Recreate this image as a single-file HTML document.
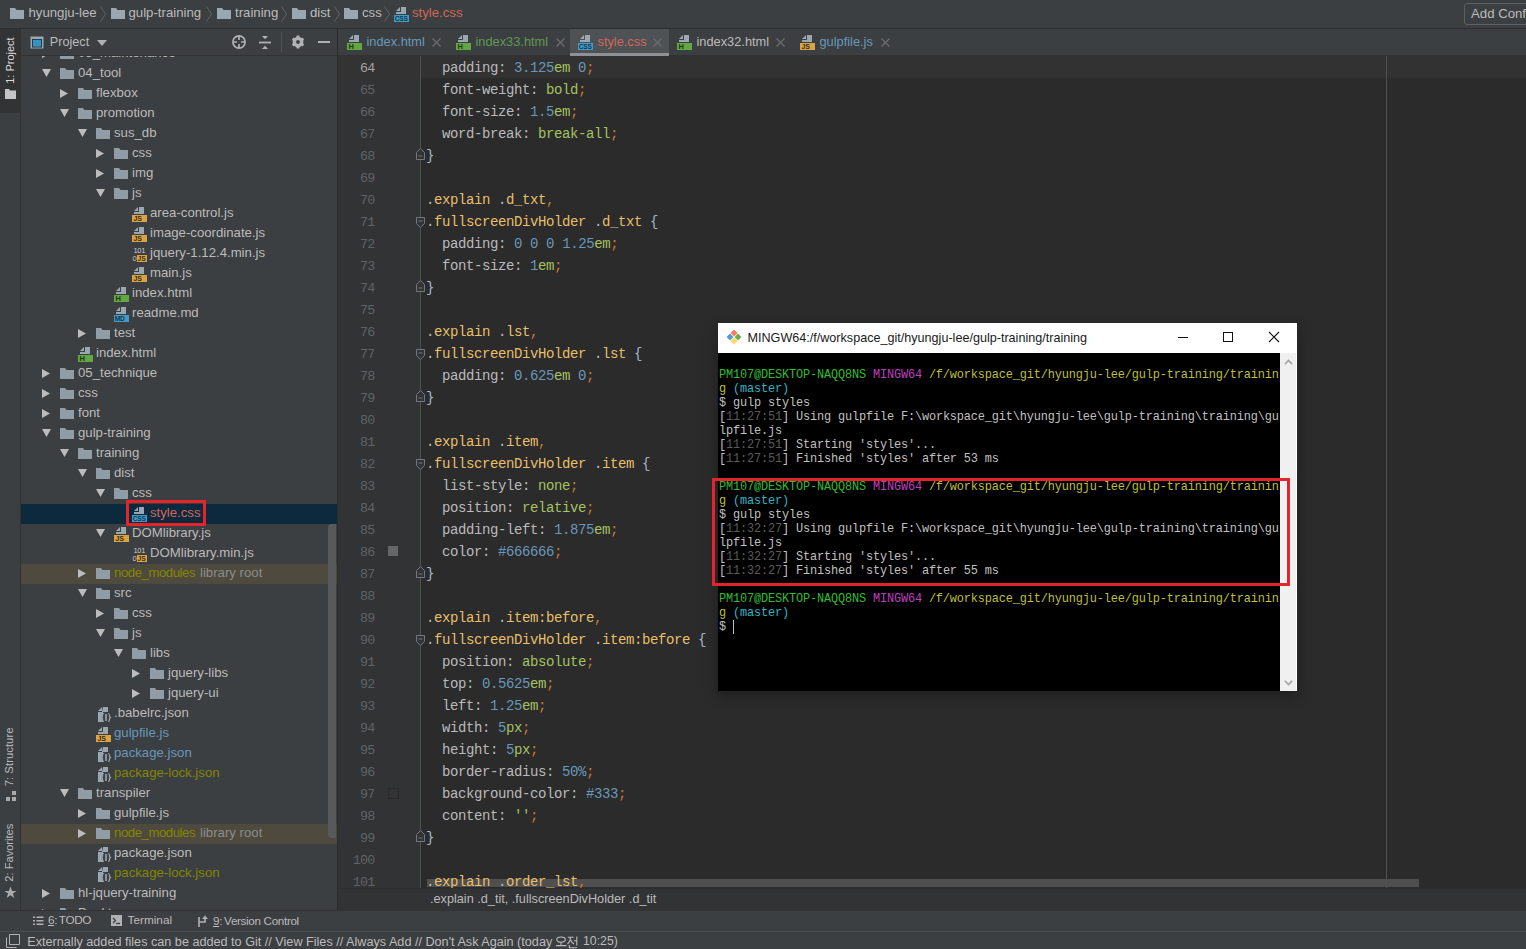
<!DOCTYPE html><html><head><meta charset="utf-8"><style>
*{margin:0;padding:0;box-sizing:border-box}
html,body{width:1526px;height:949px;overflow:hidden;background:#3c3f41}
body{position:relative;font-family:"Liberation Sans",sans-serif;color:#bbbbbb}
.abs{position:absolute}
.t{position:absolute;white-space:pre;font-family:"Liberation Sans",sans-serif}
.m{position:absolute;white-space:pre;font-family:"Liberation Mono",monospace}
svg{position:absolute;overflow:visible}


</style></head><body>
<div class="abs" style="left:0px;top:0px;width:1526px;height:28px;background:#3c3f41;"></div>
<div class="abs" style="left:0px;top:28px;width:1526px;height:1px;background:#2b2d2e;"></div>
<svg style="left:10px;top:8px" width="14" height="11" viewBox="0 0 14 11"><path d="M0 0H5L6.5 2H14V11H0Z" fill="#9aa7b0"/></svg>
<div class="t" style="left:28.5px;top:6.05px;font-size:13.2px;line-height:14.744px;color:#bbbbbb;">hyungju-lee</div>
<svg style="left:100px;top:6px" width="6" height="16" viewBox="0 0 6 16"><path d="M0.5 0.5L5.5 8L0.5 15.5" stroke="#606366" stroke-width="1" fill="none"/></svg>
<svg style="left:111px;top:8px" width="14" height="11" viewBox="0 0 14 11"><path d="M0 0H5L6.5 2H14V11H0Z" fill="#9aa7b0"/></svg>
<div class="t" style="left:128.5px;top:6.05px;font-size:13.2px;line-height:14.744px;color:#bbbbbb;">gulp-training</div>
<svg style="left:206px;top:6px" width="6" height="16" viewBox="0 0 6 16"><path d="M0.5 0.5L5.5 8L0.5 15.5" stroke="#606366" stroke-width="1" fill="none"/></svg>
<svg style="left:217px;top:8px" width="14" height="11" viewBox="0 0 14 11"><path d="M0 0H5L6.5 2H14V11H0Z" fill="#9aa7b0"/></svg>
<div class="t" style="left:235px;top:6.05px;font-size:13.2px;line-height:14.744px;color:#bbbbbb;">training</div>
<svg style="left:281px;top:6px" width="6" height="16" viewBox="0 0 6 16"><path d="M0.5 0.5L5.5 8L0.5 15.5" stroke="#606366" stroke-width="1" fill="none"/></svg>
<svg style="left:292px;top:8px" width="14" height="11" viewBox="0 0 14 11"><path d="M0 0H5L6.5 2H14V11H0Z" fill="#9aa7b0"/></svg>
<div class="t" style="left:310px;top:6.05px;font-size:13.2px;line-height:14.744px;color:#bbbbbb;">dist</div>
<svg style="left:334px;top:6px" width="6" height="16" viewBox="0 0 6 16"><path d="M0.5 0.5L5.5 8L0.5 15.5" stroke="#606366" stroke-width="1" fill="none"/></svg>
<svg style="left:344px;top:8px" width="14" height="11" viewBox="0 0 14 11"><path d="M0 0H5L6.5 2H14V11H0Z" fill="#9aa7b0"/></svg>
<div class="t" style="left:362px;top:6.05px;font-size:13.2px;line-height:14.744px;color:#bbbbbb;">css</div>
<svg style="left:384px;top:6px" width="6" height="16" viewBox="0 0 6 16"><path d="M0.5 0.5L5.5 8L0.5 15.5" stroke="#606366" stroke-width="1" fill="none"/></svg>
<svg style="left:394px;top:7px" width="16" height="16" viewBox="0 0 16 16"><path d="M2 4L6 0V4Z" fill="#9aa7b0"/><path d="M7 0H12V7H2V5H7Z" fill="#9aa7b0"/><rect x="0" y="8" width="15" height="7" fill="#4599c4"/><text x="0.8" y="14.4" font-family="Liberation Sans" font-size="6.6" font-weight="bold" fill="#0d3a52" letter-spacing="-0.2">CSS</text></svg>
<div class="t" style="left:412px;top:6.05px;font-size:13.2px;line-height:14.744px;color:#d1675a;">style.css</div>
<div class="abs" style="left:1464px;top:3px;width:80px;height:22px;background:#3c3f41;border:1px solid #5e6060;border-radius:3px"></div>
<div class="t" style="left:1471px;top:7.05px;font-size:13.2px;line-height:14.744px;color:#bbbbbb;">Add Configuration...</div>
<div class="abs" style="left:0px;top:29px;width:21px;height:881px;background:#3c3f41;"></div>
<div class="abs" style="left:20px;top:29px;width:1px;height:881px;background:#323232;"></div>
<div class="abs" style="left:0px;top:29px;width:20px;height:84px;background:#313335;"></div>
<div class="t" style="left:-19.5px;top:53.6px;width:60px;text-align:center;font-size:11px;line-height:13.2px;color:#dcdcdc;transform:rotate(-90deg);transform-origin:50% 50%">1: Project</div>
<svg style="left:5px;top:89px" width="11" height="10" viewBox="0 0 11 10"><path d="M0 0H4L5 1.5H11V10H0Z" fill="#c4c4c4"/></svg>
<div class="t" style="left:-23.0px;top:749.7px;width:66px;text-align:center;font-size:11.4px;line-height:13.68px;color:#bbbbbb;transform:rotate(-90deg);transform-origin:50% 50%">7: Structure</div>
<svg style="left:6px;top:791px" width="10" height="10" viewBox="0 0 10 10"><rect x="0" y="6" width="4" height="4" fill="#aaaaaa"/><rect x="6" y="6" width="4" height="4" fill="#aaaaaa"/><rect x="6" y="0" width="4" height="4" fill="#aaaaaa"/></svg>
<div class="t" style="left:-23.0px;top:846.3px;width:66px;text-align:center;font-size:11.1px;line-height:13.319999999999999px;color:#bbbbbb;transform:rotate(-90deg);transform-origin:50% 50%">2: Favorites</div>
<svg style="left:4px;top:886px" width="13" height="13" viewBox="0 0 24 24"><path d="M12 1L15 9H23L16.5 14L19 22L12 17L5 22L7.5 14L1 9H9Z" fill="#aaaaaa"/></svg>
<div class="abs" style="left:21px;top:29px;width:316px;height:26px;background:#3c3f41;"></div>
<div class="abs" style="left:21px;top:55px;width:316px;height:1px;background:#323232;"></div>
<div class="abs" style="left:337px;top:29px;width:1px;height:881px;background:#2b2b2b;"></div>
<svg style="left:30px;top:36px" width="14" height="13" viewBox="0 0 14 13"><rect x="0.5" y="0.5" width="13" height="12" fill="#9aa7b0"/><rect x="2" y="3" width="10" height="8.5" fill="#1f2a30"/><rect x="2.8" y="3.8" width="8.4" height="6.9" fill="#3592c4"/></svg>
<div class="t" style="left:49.7px;top:34.51px;font-size:12.7px;line-height:14.186px;color:#bbbbbb;">Project</div>
<svg style="left:97px;top:40px" width="10" height="6" viewBox="0 0 10 6"><path d="M0 0H10L5 6Z" fill="#afb1b3"/></svg>
<svg style="left:232px;top:35px" width="14" height="14" viewBox="0 0 14 14"><circle cx="7" cy="7" r="6.1" fill="none" stroke="#afb1b3" stroke-width="1.7"/><path d="M7 1V5M7 9V13M1 7H5M9 7H13" stroke="#afb1b3" stroke-width="1.7"/></svg>
<svg style="left:259px;top:36px" width="12" height="13" viewBox="0 0 12 13"><path d="M0 6.5H12" stroke="#afb1b3" stroke-width="1.8"/><path d="M3 0H9L6 3.2Z M3 13H9L6 9.8Z" fill="#afb1b3"/></svg>
<div class="abs" style="left:281px;top:32px;width:1px;height:20px;background:#505356;"></div>
<svg style="left:291px;top:35px" width="14" height="14" viewBox="0 0 14 14"><g fill="#afb1b3"><circle cx="7" cy="7" r="5.3"/><rect x="5.5" y="0.6" width="3" height="12.8" rx="0.5" transform="rotate(0 7 7)"/><rect x="5.5" y="0.6" width="3" height="12.8" rx="0.5" transform="rotate(60 7 7)"/><rect x="5.5" y="0.6" width="3" height="12.8" rx="0.5" transform="rotate(120 7 7)"/></g><circle cx="7" cy="7" r="1.9" fill="#3c3f41"/></svg>
<div class="abs" style="left:318px;top:41px;width:12px;height:2px;background:#afb1b3;"></div>
<div class="abs" style="left:21px;top:56px;width:316px;height:854px;overflow:hidden">
<svg style="left:21.2px;top:-7px" width="8" height="9" viewBox="0 0 8 9"><path d="M0 0L8 4.5L0 9Z" fill="#bcbcbc"/></svg>
<svg style="left:39px;top:-8px" width="14" height="11" viewBox="0 0 14 11"><path d="M0 0H5L6.5 2H14V11H0Z" fill="#919da6"/></svg>
<div class="t" style="left:57px;top:-9.95px;font-size:13.2px;line-height:14.744px;color:#bbbbbb;">05_maintenance</div>
<svg style="left:21px;top:13px" width="9" height="8" viewBox="0 0 9 8"><path d="M0 0H9L4.5 8Z" fill="#bcbcbc"/></svg>
<svg style="left:39px;top:12px" width="14" height="11" viewBox="0 0 14 11"><path d="M0 0H5L6.5 2H14V11H0Z" fill="#919da6"/></svg>
<div class="t" style="left:57px;top:10.05px;font-size:13.2px;line-height:14.744px;color:#bbbbbb;">04_tool</div>
<svg style="left:39.2px;top:33px" width="8" height="9" viewBox="0 0 8 9"><path d="M0 0L8 4.5L0 9Z" fill="#bcbcbc"/></svg>
<svg style="left:57px;top:32px" width="14" height="11" viewBox="0 0 14 11"><path d="M0 0H5L6.5 2H14V11H0Z" fill="#919da6"/></svg>
<div class="t" style="left:75px;top:30.05px;font-size:13.2px;line-height:14.744px;color:#bbbbbb;">flexbox</div>
<svg style="left:39px;top:53px" width="9" height="8" viewBox="0 0 9 8"><path d="M0 0H9L4.5 8Z" fill="#bcbcbc"/></svg>
<svg style="left:57px;top:52px" width="14" height="11" viewBox="0 0 14 11"><path d="M0 0H5L6.5 2H14V11H0Z" fill="#919da6"/></svg>
<div class="t" style="left:75px;top:50.05px;font-size:13.2px;line-height:14.744px;color:#bbbbbb;">promotion</div>
<svg style="left:57px;top:73px" width="9" height="8" viewBox="0 0 9 8"><path d="M0 0H9L4.5 8Z" fill="#bcbcbc"/></svg>
<svg style="left:75px;top:72px" width="14" height="11" viewBox="0 0 14 11"><path d="M0 0H5L6.5 2H14V11H0Z" fill="#919da6"/></svg>
<div class="t" style="left:93px;top:70.05px;font-size:13.2px;line-height:14.744px;color:#bbbbbb;">sus_db</div>
<svg style="left:75.2px;top:93px" width="8" height="9" viewBox="0 0 8 9"><path d="M0 0L8 4.5L0 9Z" fill="#bcbcbc"/></svg>
<svg style="left:93px;top:92px" width="14" height="11" viewBox="0 0 14 11"><path d="M0 0H5L6.5 2H14V11H0Z" fill="#919da6"/></svg>
<div class="t" style="left:111px;top:90.05px;font-size:13.2px;line-height:14.744px;color:#bbbbbb;">css</div>
<svg style="left:75.2px;top:113px" width="8" height="9" viewBox="0 0 8 9"><path d="M0 0L8 4.5L0 9Z" fill="#bcbcbc"/></svg>
<svg style="left:93px;top:112px" width="14" height="11" viewBox="0 0 14 11"><path d="M0 0H5L6.5 2H14V11H0Z" fill="#919da6"/></svg>
<div class="t" style="left:111px;top:110.05px;font-size:13.2px;line-height:14.744px;color:#bbbbbb;">img</div>
<svg style="left:75px;top:133px" width="9" height="8" viewBox="0 0 9 8"><path d="M0 0H9L4.5 8Z" fill="#bcbcbc"/></svg>
<svg style="left:93px;top:132px" width="14" height="11" viewBox="0 0 14 11"><path d="M0 0H5L6.5 2H14V11H0Z" fill="#919da6"/></svg>
<div class="t" style="left:111px;top:130.05px;font-size:13.2px;line-height:14.744px;color:#bbbbbb;">js</div>
<svg style="left:111px;top:151px" width="16" height="16" viewBox="0 0 16 16"><path d="M2 4L6 0V4Z" fill="#9aa7b0"/><path d="M7 0H12V7H2V5H7Z" fill="#9aa7b0"/><rect x="0" y="8" width="15" height="7" fill="#d9a343"/><text x="1.5" y="14.4" font-family="Liberation Sans" font-size="7" font-weight="bold" fill="#3a2e12" letter-spacing="-0.2">JS</text></svg>
<div class="t" style="left:129px;top:150.05px;font-size:13.2px;line-height:14.744px;color:#bbbbbb;">area-control.js</div>
<svg style="left:111px;top:171px" width="16" height="16" viewBox="0 0 16 16"><path d="M2 4L6 0V4Z" fill="#9aa7b0"/><path d="M7 0H12V7H2V5H7Z" fill="#9aa7b0"/><rect x="0" y="8" width="15" height="7" fill="#d9a343"/><text x="1.5" y="14.4" font-family="Liberation Sans" font-size="7" font-weight="bold" fill="#3a2e12" letter-spacing="-0.2">JS</text></svg>
<div class="t" style="left:129px;top:170.05px;font-size:13.2px;line-height:14.744px;color:#bbbbbb;">image-coordinate.js</div>
<svg style="left:111px;top:190px" width="16" height="17" viewBox="0 0 16 17"><text x="1.5" y="6.5" font-family="Liberation Sans" font-size="7.5" fill="#c8c8c8" letter-spacing="-0.3">101</text><text x="0.5" y="15" font-family="Liberation Sans" font-size="7.5" fill="#c8c8c8">0</text><rect x="5" y="9" width="10" height="7" fill="#d9a343"/><text x="5.6" y="15.2" font-family="Liberation Sans" font-size="6.6" font-weight="bold" fill="#3a2e12">JS</text></svg>
<div class="t" style="left:129px;top:190.05px;font-size:13.2px;line-height:14.744px;color:#bbbbbb;">jquery-1.12.4.min.js</div>
<svg style="left:111px;top:211px" width="16" height="16" viewBox="0 0 16 16"><path d="M2 4L6 0V4Z" fill="#9aa7b0"/><path d="M7 0H12V7H2V5H7Z" fill="#9aa7b0"/><rect x="0" y="8" width="15" height="7" fill="#d9a343"/><text x="1.5" y="14.4" font-family="Liberation Sans" font-size="7" font-weight="bold" fill="#3a2e12" letter-spacing="-0.2">JS</text></svg>
<div class="t" style="left:129px;top:210.05px;font-size:13.2px;line-height:14.744px;color:#bbbbbb;">main.js</div>
<svg style="left:93px;top:231px" width="16" height="16" viewBox="0 0 16 16"><path d="M2 4L6 0V4Z" fill="#9aa7b0"/><path d="M7 0H12V7H2V5H7Z" fill="#9aa7b0"/><rect x="0" y="8" width="15" height="7" fill="#62a744"/><text x="1.6" y="14.4" font-family="Liberation Sans" font-size="7.5" font-weight="bold" fill="#1d3b10" letter-spacing="-0.2">H</text></svg>
<div class="t" style="left:111px;top:230.05px;font-size:13.2px;line-height:14.744px;color:#bbbbbb;">index.html</div>
<svg style="left:93px;top:251px" width="16" height="16" viewBox="0 0 16 16"><path d="M2 4L6 0V4Z" fill="#9aa7b0"/><path d="M7 0H12V7H2V5H7Z" fill="#9aa7b0"/><rect x="0" y="8" width="15" height="7" fill="#4599c4"/><text x="0.8" y="14.4" font-family="Liberation Sans" font-size="6.6" font-weight="bold" fill="#0d3a52" letter-spacing="-0.2">MD</text></svg>
<div class="t" style="left:111px;top:250.05px;font-size:13.2px;line-height:14.744px;color:#bbbbbb;">readme.md</div>
<svg style="left:57.2px;top:273px" width="8" height="9" viewBox="0 0 8 9"><path d="M0 0L8 4.5L0 9Z" fill="#bcbcbc"/></svg>
<svg style="left:75px;top:272px" width="14" height="11" viewBox="0 0 14 11"><path d="M0 0H5L6.5 2H14V11H0Z" fill="#919da6"/></svg>
<div class="t" style="left:93px;top:270.05px;font-size:13.2px;line-height:14.744px;color:#bbbbbb;">test</div>
<svg style="left:57px;top:291px" width="16" height="16" viewBox="0 0 16 16"><path d="M2 4L6 0V4Z" fill="#9aa7b0"/><path d="M7 0H12V7H2V5H7Z" fill="#9aa7b0"/><rect x="0" y="8" width="15" height="7" fill="#62a744"/><text x="1.6" y="14.4" font-family="Liberation Sans" font-size="7.5" font-weight="bold" fill="#1d3b10" letter-spacing="-0.2">H</text></svg>
<div class="t" style="left:75px;top:290.05px;font-size:13.2px;line-height:14.744px;color:#bbbbbb;">index.html</div>
<svg style="left:21.2px;top:313px" width="8" height="9" viewBox="0 0 8 9"><path d="M0 0L8 4.5L0 9Z" fill="#bcbcbc"/></svg>
<svg style="left:39px;top:312px" width="14" height="11" viewBox="0 0 14 11"><path d="M0 0H5L6.5 2H14V11H0Z" fill="#919da6"/></svg>
<div class="t" style="left:57px;top:310.05px;font-size:13.2px;line-height:14.744px;color:#bbbbbb;">05_technique</div>
<svg style="left:21.2px;top:333px" width="8" height="9" viewBox="0 0 8 9"><path d="M0 0L8 4.5L0 9Z" fill="#bcbcbc"/></svg>
<svg style="left:39px;top:332px" width="14" height="11" viewBox="0 0 14 11"><path d="M0 0H5L6.5 2H14V11H0Z" fill="#919da6"/></svg>
<div class="t" style="left:57px;top:330.05px;font-size:13.2px;line-height:14.744px;color:#bbbbbb;">css</div>
<svg style="left:21.2px;top:353px" width="8" height="9" viewBox="0 0 8 9"><path d="M0 0L8 4.5L0 9Z" fill="#bcbcbc"/></svg>
<svg style="left:39px;top:352px" width="14" height="11" viewBox="0 0 14 11"><path d="M0 0H5L6.5 2H14V11H0Z" fill="#919da6"/></svg>
<div class="t" style="left:57px;top:350.05px;font-size:13.2px;line-height:14.744px;color:#bbbbbb;">font</div>
<svg style="left:21px;top:373px" width="9" height="8" viewBox="0 0 9 8"><path d="M0 0H9L4.5 8Z" fill="#bcbcbc"/></svg>
<svg style="left:39px;top:372px" width="14" height="11" viewBox="0 0 14 11"><path d="M0 0H5L6.5 2H14V11H0Z" fill="#919da6"/></svg>
<div class="t" style="left:57px;top:370.05px;font-size:13.2px;line-height:14.744px;color:#bbbbbb;">gulp-training</div>
<svg style="left:39px;top:393px" width="9" height="8" viewBox="0 0 9 8"><path d="M0 0H9L4.5 8Z" fill="#bcbcbc"/></svg>
<svg style="left:57px;top:392px" width="14" height="11" viewBox="0 0 14 11"><path d="M0 0H5L6.5 2H14V11H0Z" fill="#919da6"/></svg>
<div class="t" style="left:75px;top:390.05px;font-size:13.2px;line-height:14.744px;color:#bbbbbb;">training</div>
<svg style="left:57px;top:413px" width="9" height="8" viewBox="0 0 9 8"><path d="M0 0H9L4.5 8Z" fill="#bcbcbc"/></svg>
<svg style="left:75px;top:412px" width="14" height="11" viewBox="0 0 14 11"><path d="M0 0H5L6.5 2H14V11H0Z" fill="#919da6"/></svg>
<div class="t" style="left:93px;top:410.05px;font-size:13.2px;line-height:14.744px;color:#bbbbbb;">dist</div>
<svg style="left:75px;top:433px" width="9" height="8" viewBox="0 0 9 8"><path d="M0 0H9L4.5 8Z" fill="#bcbcbc"/></svg>
<svg style="left:93px;top:432px" width="14" height="11" viewBox="0 0 14 11"><path d="M0 0H5L6.5 2H14V11H0Z" fill="#919da6"/></svg>
<div class="t" style="left:111px;top:430.05px;font-size:13.2px;line-height:14.744px;color:#bbbbbb;">css</div>
<div class="abs" style="left:0;top:448px;width:316px;height:20px;background:#0d293e"></div>
<svg style="left:111px;top:451px" width="16" height="16" viewBox="0 0 16 16"><path d="M2 4L6 0V4Z" fill="#9aa7b0"/><path d="M7 0H12V7H2V5H7Z" fill="#9aa7b0"/><rect x="0" y="8" width="15" height="7" fill="#4599c4"/><text x="0.8" y="14.4" font-family="Liberation Sans" font-size="6.6" font-weight="bold" fill="#0d3a52" letter-spacing="-0.2">CSS</text></svg>
<div class="t" style="left:129px;top:450.05px;font-size:13.2px;line-height:14.744px;color:#d1675a;">style.css</div>
<svg style="left:75px;top:473px" width="9" height="8" viewBox="0 0 9 8"><path d="M0 0H9L4.5 8Z" fill="#bcbcbc"/></svg>
<svg style="left:93px;top:471px" width="16" height="16" viewBox="0 0 16 16"><path d="M2 4L6 0V4Z" fill="#9aa7b0"/><path d="M7 0H12V7H2V5H7Z" fill="#9aa7b0"/><rect x="0" y="8" width="15" height="7" fill="#d9a343"/><text x="1.5" y="14.4" font-family="Liberation Sans" font-size="7" font-weight="bold" fill="#3a2e12" letter-spacing="-0.2">JS</text></svg>
<div class="t" style="left:111px;top:470.05px;font-size:13.2px;line-height:14.744px;color:#bbbbbb;">DOMlibrary.js</div>
<svg style="left:111px;top:490px" width="16" height="17" viewBox="0 0 16 17"><text x="1.5" y="6.5" font-family="Liberation Sans" font-size="7.5" fill="#c8c8c8" letter-spacing="-0.3">101</text><text x="0.5" y="15" font-family="Liberation Sans" font-size="7.5" fill="#c8c8c8">0</text><rect x="5" y="9" width="10" height="7" fill="#d9a343"/><text x="5.6" y="15.2" font-family="Liberation Sans" font-size="6.6" font-weight="bold" fill="#3a2e12">JS</text></svg>
<div class="t" style="left:129px;top:490.05px;font-size:13.2px;line-height:14.744px;color:#bbbbbb;">DOMlibrary.min.js</div>
<div class="abs" style="left:0;top:508px;width:316px;height:20px;background:#4e4a3d"></div>
<svg style="left:57.2px;top:513px" width="8" height="9" viewBox="0 0 8 9"><path d="M0 0L8 4.5L0 9Z" fill="#bcbcbc"/></svg>
<svg style="left:75px;top:512px" width="14" height="11" viewBox="0 0 14 11"><path d="M0 0H5L6.5 2H14V11H0Z" fill="#919da6"/></svg>
<div class="t" style="left:93px;top:510.05px;font-size:13.2px;line-height:14.744px;color:#848504;letter-spacing:-0.45px">node_modules</div>
<div class="t" style="left:179px;top:510.05px;font-size:13.2px;line-height:14.744px;color:#8c8c8c;">library root</div>
<svg style="left:57px;top:533px" width="9" height="8" viewBox="0 0 9 8"><path d="M0 0H9L4.5 8Z" fill="#bcbcbc"/></svg>
<svg style="left:75px;top:532px" width="14" height="11" viewBox="0 0 14 11"><path d="M0 0H5L6.5 2H14V11H0Z" fill="#919da6"/></svg>
<div class="t" style="left:93px;top:530.05px;font-size:13.2px;line-height:14.744px;color:#bbbbbb;">src</div>
<svg style="left:75.2px;top:553px" width="8" height="9" viewBox="0 0 8 9"><path d="M0 0L8 4.5L0 9Z" fill="#bcbcbc"/></svg>
<svg style="left:93px;top:552px" width="14" height="11" viewBox="0 0 14 11"><path d="M0 0H5L6.5 2H14V11H0Z" fill="#919da6"/></svg>
<div class="t" style="left:111px;top:550.05px;font-size:13.2px;line-height:14.744px;color:#bbbbbb;">css</div>
<svg style="left:75px;top:573px" width="9" height="8" viewBox="0 0 9 8"><path d="M0 0H9L4.5 8Z" fill="#bcbcbc"/></svg>
<svg style="left:93px;top:572px" width="14" height="11" viewBox="0 0 14 11"><path d="M0 0H5L6.5 2H14V11H0Z" fill="#919da6"/></svg>
<div class="t" style="left:111px;top:570.05px;font-size:13.2px;line-height:14.744px;color:#bbbbbb;">js</div>
<svg style="left:93px;top:593px" width="9" height="8" viewBox="0 0 9 8"><path d="M0 0H9L4.5 8Z" fill="#bcbcbc"/></svg>
<svg style="left:111px;top:592px" width="14" height="11" viewBox="0 0 14 11"><path d="M0 0H5L6.5 2H14V11H0Z" fill="#919da6"/></svg>
<div class="t" style="left:129px;top:590.05px;font-size:13.2px;line-height:14.744px;color:#bbbbbb;">libs</div>
<svg style="left:111.2px;top:613px" width="8" height="9" viewBox="0 0 8 9"><path d="M0 0L8 4.5L0 9Z" fill="#bcbcbc"/></svg>
<svg style="left:129px;top:612px" width="14" height="11" viewBox="0 0 14 11"><path d="M0 0H5L6.5 2H14V11H0Z" fill="#919da6"/></svg>
<div class="t" style="left:147px;top:610.05px;font-size:13.2px;line-height:14.744px;color:#bbbbbb;">jquery-libs</div>
<svg style="left:111.2px;top:633px" width="8" height="9" viewBox="0 0 8 9"><path d="M0 0L8 4.5L0 9Z" fill="#bcbcbc"/></svg>
<svg style="left:129px;top:632px" width="14" height="11" viewBox="0 0 14 11"><path d="M0 0H5L6.5 2H14V11H0Z" fill="#919da6"/></svg>
<div class="t" style="left:147px;top:630.05px;font-size:13.2px;line-height:14.744px;color:#bbbbbb;">jquery-ui</div>
<svg style="left:75px;top:651px" width="16" height="16" viewBox="0 0 16 16"><path d="M2 4L6 0V4Z" fill="#9aa7b0"/><path d="M7 0H12V5H2V15H6V5Z" fill="#9aa7b0"/><path d="M2 5H7V15H2Z" fill="#9aa7b0"/><ellipse cx="10" cy="10.5" rx="4.5" ry="5" fill="#3c3f41"/><path d="M8 6.5Q6.5 6.5 6.5 8.5V9.5L5.5 10.5L6.5 11.5V12.5Q6.5 14.5 8 14.5M12 6.5Q13.5 6.5 13.5 8.5V9.5L14.5 10.5L13.5 11.5V12.5Q13.5 14.5 12 14.5" stroke="#9aa7b0" stroke-width="1.2" fill="none"/><path d="M10 7V14" stroke="#9aa7b0" stroke-width="1.6"/></svg>
<div class="t" style="left:93px;top:650.05px;font-size:13.2px;line-height:14.744px;color:#bbbbbb;">.babelrc.json</div>
<svg style="left:75px;top:671px" width="16" height="16" viewBox="0 0 16 16"><path d="M2 4L6 0V4Z" fill="#9aa7b0"/><path d="M7 0H12V7H2V5H7Z" fill="#9aa7b0"/><rect x="0" y="8" width="15" height="7" fill="#d9a343"/><text x="1.5" y="14.4" font-family="Liberation Sans" font-size="7" font-weight="bold" fill="#3a2e12" letter-spacing="-0.2">JS</text></svg>
<div class="t" style="left:93px;top:670.05px;font-size:13.2px;line-height:14.744px;color:#6897bb;">gulpfile.js</div>
<svg style="left:75px;top:691px" width="16" height="16" viewBox="0 0 16 16"><path d="M2 4L6 0V4Z" fill="#9aa7b0"/><path d="M7 0H12V5H2V15H6V5Z" fill="#9aa7b0"/><path d="M2 5H7V15H2Z" fill="#9aa7b0"/><ellipse cx="10" cy="10.5" rx="4.5" ry="5" fill="#3c3f41"/><path d="M8 6.5Q6.5 6.5 6.5 8.5V9.5L5.5 10.5L6.5 11.5V12.5Q6.5 14.5 8 14.5M12 6.5Q13.5 6.5 13.5 8.5V9.5L14.5 10.5L13.5 11.5V12.5Q13.5 14.5 12 14.5" stroke="#9aa7b0" stroke-width="1.2" fill="none"/><path d="M10 7V14" stroke="#9aa7b0" stroke-width="1.6"/></svg>
<div class="t" style="left:93px;top:690.05px;font-size:13.2px;line-height:14.744px;color:#6897bb;">package.json</div>
<svg style="left:75px;top:711px" width="16" height="16" viewBox="0 0 16 16"><path d="M2 4L6 0V4Z" fill="#9aa7b0"/><path d="M7 0H12V5H2V15H6V5Z" fill="#9aa7b0"/><path d="M2 5H7V15H2Z" fill="#9aa7b0"/><ellipse cx="10" cy="10.5" rx="4.5" ry="5" fill="#3c3f41"/><path d="M8 6.5Q6.5 6.5 6.5 8.5V9.5L5.5 10.5L6.5 11.5V12.5Q6.5 14.5 8 14.5M12 6.5Q13.5 6.5 13.5 8.5V9.5L14.5 10.5L13.5 11.5V12.5Q13.5 14.5 12 14.5" stroke="#9aa7b0" stroke-width="1.2" fill="none"/><path d="M10 7V14" stroke="#9aa7b0" stroke-width="1.6"/></svg>
<div class="t" style="left:93px;top:710.05px;font-size:13.2px;line-height:14.744px;color:#848504;">package-lock.json</div>
<svg style="left:39px;top:733px" width="9" height="8" viewBox="0 0 9 8"><path d="M0 0H9L4.5 8Z" fill="#bcbcbc"/></svg>
<svg style="left:57px;top:732px" width="14" height="11" viewBox="0 0 14 11"><path d="M0 0H5L6.5 2H14V11H0Z" fill="#919da6"/></svg>
<div class="t" style="left:75px;top:730.05px;font-size:13.2px;line-height:14.744px;color:#bbbbbb;">transpiler</div>
<svg style="left:57.2px;top:753px" width="8" height="9" viewBox="0 0 8 9"><path d="M0 0L8 4.5L0 9Z" fill="#bcbcbc"/></svg>
<svg style="left:75px;top:752px" width="14" height="11" viewBox="0 0 14 11"><path d="M0 0H5L6.5 2H14V11H0Z" fill="#919da6"/></svg>
<div class="t" style="left:93px;top:750.05px;font-size:13.2px;line-height:14.744px;color:#bbbbbb;">gulpfile.js</div>
<div class="abs" style="left:0;top:768px;width:316px;height:20px;background:#4e4a3d"></div>
<svg style="left:57.2px;top:773px" width="8" height="9" viewBox="0 0 8 9"><path d="M0 0L8 4.5L0 9Z" fill="#bcbcbc"/></svg>
<svg style="left:75px;top:772px" width="14" height="11" viewBox="0 0 14 11"><path d="M0 0H5L6.5 2H14V11H0Z" fill="#919da6"/></svg>
<div class="t" style="left:93px;top:770.05px;font-size:13.2px;line-height:14.744px;color:#848504;letter-spacing:-0.45px">node_modules</div>
<div class="t" style="left:179px;top:770.05px;font-size:13.2px;line-height:14.744px;color:#8c8c8c;">library root</div>
<svg style="left:75px;top:791px" width="16" height="16" viewBox="0 0 16 16"><path d="M2 4L6 0V4Z" fill="#9aa7b0"/><path d="M7 0H12V5H2V15H6V5Z" fill="#9aa7b0"/><path d="M2 5H7V15H2Z" fill="#9aa7b0"/><ellipse cx="10" cy="10.5" rx="4.5" ry="5" fill="#3c3f41"/><path d="M8 6.5Q6.5 6.5 6.5 8.5V9.5L5.5 10.5L6.5 11.5V12.5Q6.5 14.5 8 14.5M12 6.5Q13.5 6.5 13.5 8.5V9.5L14.5 10.5L13.5 11.5V12.5Q13.5 14.5 12 14.5" stroke="#9aa7b0" stroke-width="1.2" fill="none"/><path d="M10 7V14" stroke="#9aa7b0" stroke-width="1.6"/></svg>
<div class="t" style="left:93px;top:790.05px;font-size:13.2px;line-height:14.744px;color:#bbbbbb;">package.json</div>
<svg style="left:75px;top:811px" width="16" height="16" viewBox="0 0 16 16"><path d="M2 4L6 0V4Z" fill="#9aa7b0"/><path d="M7 0H12V5H2V15H6V5Z" fill="#9aa7b0"/><path d="M2 5H7V15H2Z" fill="#9aa7b0"/><ellipse cx="10" cy="10.5" rx="4.5" ry="5" fill="#3c3f41"/><path d="M8 6.5Q6.5 6.5 6.5 8.5V9.5L5.5 10.5L6.5 11.5V12.5Q6.5 14.5 8 14.5M12 6.5Q13.5 6.5 13.5 8.5V9.5L14.5 10.5L13.5 11.5V12.5Q13.5 14.5 12 14.5" stroke="#9aa7b0" stroke-width="1.2" fill="none"/><path d="M10 7V14" stroke="#9aa7b0" stroke-width="1.6"/></svg>
<div class="t" style="left:93px;top:810.05px;font-size:13.2px;line-height:14.744px;color:#848504;">package-lock.json</div>
<svg style="left:21.2px;top:833px" width="8" height="9" viewBox="0 0 8 9"><path d="M0 0L8 4.5L0 9Z" fill="#bcbcbc"/></svg>
<svg style="left:39px;top:832px" width="14" height="11" viewBox="0 0 14 11"><path d="M0 0H5L6.5 2H14V11H0Z" fill="#919da6"/></svg>
<div class="t" style="left:57px;top:830.05px;font-size:13.2px;line-height:14.744px;color:#bbbbbb;">hl-jquery-training</div>
<svg style="left:21.2px;top:853px" width="8" height="9" viewBox="0 0 8 9"><path d="M0 0L8 4.5L0 9Z" fill="#bcbcbc"/></svg>
<svg style="left:39px;top:852px" width="14" height="11" viewBox="0 0 14 11"><path d="M0 0H5L6.5 2H14V11H0Z" fill="#919da6"/></svg>
<div class="t" style="left:57px;top:850.05px;font-size:13.2px;line-height:14.744px;color:#bbbbbb;">Desktop</div>
</div>
<div class="abs" style="left:328px;top:524px;width:8px;height:314px;background:#57595b;border-radius:4px 0 0 4px"></div>
<div class="abs" style="left:126px;top:500px;width:80px;height:26px;border:3px solid #e3242b"></div>
<div class="abs" style="left:338px;top:29px;width:1188px;height:26px;background:#3c3f41;"></div>
<div class="abs" style="left:338px;top:55px;width:1188px;height:1px;background:#323232;"></div>
<div class="abs" style="left:570px;top:29px;width:99px;height:27px;background:#4e5254;"></div>
<div class="abs" style="left:570px;top:53px;width:99px;height:3px;background:#8e9297;"></div>
<svg style="left:347px;top:35px" width="16" height="16" viewBox="0 0 16 16"><path d="M2 4L6 0V4Z" fill="#9aa7b0"/><path d="M7 0H12V7H2V5H7Z" fill="#9aa7b0"/><rect x="0" y="8" width="15" height="7" fill="#62a744"/><text x="1.6" y="14.4" font-family="Liberation Sans" font-size="7.5" font-weight="bold" fill="#1d3b10" letter-spacing="-0.2">H</text></svg>
<div class="t" style="left:366.5px;top:35.42px;font-size:12.8px;line-height:14.298px;color:#6897bb;">index.html</div>
<svg style="left:432px;top:38px" width="9" height="9" viewBox="0 0 9 9"><path d="M0.5 0.5L8.5 8.5M8.5 0.5L0.5 8.5" stroke="#6c6e70" stroke-width="1.1"/></svg>
<svg style="left:456px;top:35px" width="16" height="16" viewBox="0 0 16 16"><path d="M2 4L6 0V4Z" fill="#9aa7b0"/><path d="M7 0H12V7H2V5H7Z" fill="#9aa7b0"/><rect x="0" y="8" width="15" height="7" fill="#62a744"/><text x="1.6" y="14.4" font-family="Liberation Sans" font-size="7.5" font-weight="bold" fill="#1d3b10" letter-spacing="-0.2">H</text></svg>
<div class="t" style="left:475.5px;top:35.42px;font-size:12.8px;line-height:14.298px;color:#629755;">index33.html</div>
<svg style="left:556px;top:38px" width="9" height="9" viewBox="0 0 9 9"><path d="M0.5 0.5L8.5 8.5M8.5 0.5L0.5 8.5" stroke="#6c6e70" stroke-width="1.1"/></svg>
<svg style="left:578px;top:35px" width="16" height="16" viewBox="0 0 16 16"><path d="M2 4L6 0V4Z" fill="#9aa7b0"/><path d="M7 0H12V7H2V5H7Z" fill="#9aa7b0"/><rect x="0" y="8" width="15" height="7" fill="#4599c4"/><text x="0.8" y="14.4" font-family="Liberation Sans" font-size="6.6" font-weight="bold" fill="#0d3a52" letter-spacing="-0.2">CSS</text></svg>
<div class="t" style="left:597.5px;top:35.42px;font-size:12.8px;line-height:14.298px;color:#d1675a;">style.css</div>
<svg style="left:653px;top:38px" width="9" height="9" viewBox="0 0 9 9"><path d="M0.5 0.5L8.5 8.5M8.5 0.5L0.5 8.5" stroke="#6c6e70" stroke-width="1.1"/></svg>
<svg style="left:677px;top:35px" width="16" height="16" viewBox="0 0 16 16"><path d="M2 4L6 0V4Z" fill="#9aa7b0"/><path d="M7 0H12V7H2V5H7Z" fill="#9aa7b0"/><rect x="0" y="8" width="15" height="7" fill="#62a744"/><text x="1.6" y="14.4" font-family="Liberation Sans" font-size="7.5" font-weight="bold" fill="#1d3b10" letter-spacing="-0.2">H</text></svg>
<div class="t" style="left:696.5px;top:35.42px;font-size:12.8px;line-height:14.298px;color:#bbbbbb;">index32.html</div>
<svg style="left:776px;top:38px" width="9" height="9" viewBox="0 0 9 9"><path d="M0.5 0.5L8.5 8.5M8.5 0.5L0.5 8.5" stroke="#6c6e70" stroke-width="1.1"/></svg>
<svg style="left:800px;top:35px" width="16" height="16" viewBox="0 0 16 16"><path d="M2 4L6 0V4Z" fill="#9aa7b0"/><path d="M7 0H12V7H2V5H7Z" fill="#9aa7b0"/><rect x="0" y="8" width="15" height="7" fill="#d9a343"/><text x="1.5" y="14.4" font-family="Liberation Sans" font-size="7" font-weight="bold" fill="#3a2e12" letter-spacing="-0.2">JS</text></svg>
<div class="t" style="left:819.5px;top:35.42px;font-size:12.8px;line-height:14.298px;color:#6897bb;">gulpfile.js</div>
<svg style="left:881px;top:38px" width="9" height="9" viewBox="0 0 9 9"><path d="M0.5 0.5L8.5 8.5M8.5 0.5L0.5 8.5" stroke="#6c6e70" stroke-width="1.1"/></svg>
<div class="abs" style="left:338px;top:56px;width:1188px;height:832px;background:#2b2b2b;"></div>
<div class="abs" style="left:338px;top:56px;width:82px;height:832px;background:#313335;"></div>
<div class="abs" style="left:421px;top:56px;width:1105px;height:22px;background:#323232;"></div>
<div class="abs" style="left:338px;top:56px;width:82px;height:22px;background:#333333;"></div>
<div class="abs" style="left:427px;top:879px;width:992px;height:8px;background:#4f4f4f;"></div>
<div class="abs" style="left:420px;top:56px;width:1px;height:832px;background:#4e5052;"></div>
<div class="abs" style="left:1386px;top:56px;width:1px;height:832px;background:#505050;"></div>
<div class="abs" style="left:338px;top:56px;width:1188px;height:832px;overflow:hidden">
<div class="m" style="left:0px;width:36.4px;text-align:right;top:5.29px;font-size:13.34px;line-height:15.11px;letter-spacing:-0.8px;color:#a4a3a3">64</div>
<div class="m" style="left:88px;top:5.04px;font-size:14px;line-height:15.86px;letter-spacing:-0.4px"><span style="color:#bababa">  padding</span><span style="color:#bababa">: </span><span style="color:#6897bb">3.125</span><span style="color:#a5c261">em</span><span style="color:#bababa"> </span><span style="color:#6897bb">0</span><span style="color:#cc7832">;</span></div>
<div class="m" style="left:0px;width:36.4px;text-align:right;top:27.29px;font-size:13.34px;line-height:15.11px;letter-spacing:-0.8px;color:#606366">65</div>
<div class="m" style="left:88px;top:27.04px;font-size:14px;line-height:15.86px;letter-spacing:-0.4px"><span style="color:#bababa">  font-weight</span><span style="color:#bababa">: </span><span style="color:#a5c261">bold</span><span style="color:#cc7832">;</span></div>
<div class="m" style="left:0px;width:36.4px;text-align:right;top:49.29px;font-size:13.34px;line-height:15.11px;letter-spacing:-0.8px;color:#606366">66</div>
<div class="m" style="left:88px;top:49.04px;font-size:14px;line-height:15.86px;letter-spacing:-0.4px"><span style="color:#bababa">  font-size</span><span style="color:#bababa">: </span><span style="color:#6897bb">1.5</span><span style="color:#a5c261">em</span><span style="color:#cc7832">;</span></div>
<div class="m" style="left:0px;width:36.4px;text-align:right;top:71.29px;font-size:13.34px;line-height:15.11px;letter-spacing:-0.8px;color:#606366">67</div>
<div class="m" style="left:88px;top:71.04px;font-size:14px;line-height:15.86px;letter-spacing:-0.4px"><span style="color:#bababa">  word-break</span><span style="color:#bababa">: </span><span style="color:#a5c261">break-all</span><span style="color:#cc7832">;</span></div>
<div class="m" style="left:0px;width:36.4px;text-align:right;top:93.29px;font-size:13.34px;line-height:15.11px;letter-spacing:-0.8px;color:#606366">68</div>
<div class="m" style="left:88px;top:93.04px;font-size:14px;line-height:15.86px;letter-spacing:-0.4px"><span style="color:#a9b7c6">}</span></div>
<div class="m" style="left:0px;width:36.4px;text-align:right;top:115.29px;font-size:13.34px;line-height:15.11px;letter-spacing:-0.8px;color:#606366">69</div>
<div class="m" style="left:0px;width:36.4px;text-align:right;top:137.29px;font-size:13.34px;line-height:15.11px;letter-spacing:-0.8px;color:#606366">70</div>
<div class="m" style="left:88px;top:137.04px;font-size:14px;line-height:15.86px;letter-spacing:-0.4px"><span style="color:#bababa">.</span><span style="color:#e8bf6a">explain</span><span style="color:#bababa"> </span><span style="color:#bababa">.</span><span style="color:#e8bf6a">d_txt</span><span style="color:#cc7832">,</span></div>
<div class="m" style="left:0px;width:36.4px;text-align:right;top:159.29px;font-size:13.34px;line-height:15.11px;letter-spacing:-0.8px;color:#606366">71</div>
<div class="m" style="left:88px;top:159.04px;font-size:14px;line-height:15.86px;letter-spacing:-0.4px"><span style="color:#bababa">.</span><span style="color:#e8bf6a">fullscreenDivHolder</span><span style="color:#bababa"> </span><span style="color:#bababa">.</span><span style="color:#e8bf6a">d_txt</span><span style="color:#a9b7c6"> {</span></div>
<div class="m" style="left:0px;width:36.4px;text-align:right;top:181.29px;font-size:13.34px;line-height:15.11px;letter-spacing:-0.8px;color:#606366">72</div>
<div class="m" style="left:88px;top:181.04px;font-size:14px;line-height:15.86px;letter-spacing:-0.4px"><span style="color:#bababa">  padding</span><span style="color:#bababa">: </span><span style="color:#6897bb">0</span><span style="color:#bababa"> </span><span style="color:#6897bb">0</span><span style="color:#bababa"> </span><span style="color:#6897bb">0</span><span style="color:#bababa"> </span><span style="color:#6897bb">1.25</span><span style="color:#a5c261">em</span><span style="color:#cc7832">;</span></div>
<div class="m" style="left:0px;width:36.4px;text-align:right;top:203.29px;font-size:13.34px;line-height:15.11px;letter-spacing:-0.8px;color:#606366">73</div>
<div class="m" style="left:88px;top:203.04px;font-size:14px;line-height:15.86px;letter-spacing:-0.4px"><span style="color:#bababa">  font-size</span><span style="color:#bababa">: </span><span style="color:#6897bb">1</span><span style="color:#a5c261">em</span><span style="color:#cc7832">;</span></div>
<div class="m" style="left:0px;width:36.4px;text-align:right;top:225.29px;font-size:13.34px;line-height:15.11px;letter-spacing:-0.8px;color:#606366">74</div>
<div class="m" style="left:88px;top:225.04px;font-size:14px;line-height:15.86px;letter-spacing:-0.4px"><span style="color:#a9b7c6">}</span></div>
<div class="m" style="left:0px;width:36.4px;text-align:right;top:247.29px;font-size:13.34px;line-height:15.11px;letter-spacing:-0.8px;color:#606366">75</div>
<div class="m" style="left:0px;width:36.4px;text-align:right;top:269.29px;font-size:13.34px;line-height:15.11px;letter-spacing:-0.8px;color:#606366">76</div>
<div class="m" style="left:88px;top:269.04px;font-size:14px;line-height:15.86px;letter-spacing:-0.4px"><span style="color:#bababa">.</span><span style="color:#e8bf6a">explain</span><span style="color:#bababa"> </span><span style="color:#bababa">.</span><span style="color:#e8bf6a">lst</span><span style="color:#cc7832">,</span></div>
<div class="m" style="left:0px;width:36.4px;text-align:right;top:291.29px;font-size:13.34px;line-height:15.11px;letter-spacing:-0.8px;color:#606366">77</div>
<div class="m" style="left:88px;top:291.04px;font-size:14px;line-height:15.86px;letter-spacing:-0.4px"><span style="color:#bababa">.</span><span style="color:#e8bf6a">fullscreenDivHolder</span><span style="color:#bababa"> </span><span style="color:#bababa">.</span><span style="color:#e8bf6a">lst</span><span style="color:#a9b7c6"> {</span></div>
<div class="m" style="left:0px;width:36.4px;text-align:right;top:313.29px;font-size:13.34px;line-height:15.11px;letter-spacing:-0.8px;color:#606366">78</div>
<div class="m" style="left:88px;top:313.04px;font-size:14px;line-height:15.86px;letter-spacing:-0.4px"><span style="color:#bababa">  padding</span><span style="color:#bababa">: </span><span style="color:#6897bb">0.625</span><span style="color:#a5c261">em</span><span style="color:#bababa"> </span><span style="color:#6897bb">0</span><span style="color:#cc7832">;</span></div>
<div class="m" style="left:0px;width:36.4px;text-align:right;top:335.29px;font-size:13.34px;line-height:15.11px;letter-spacing:-0.8px;color:#606366">79</div>
<div class="m" style="left:88px;top:335.04px;font-size:14px;line-height:15.86px;letter-spacing:-0.4px"><span style="color:#a9b7c6">}</span></div>
<div class="m" style="left:0px;width:36.4px;text-align:right;top:357.29px;font-size:13.34px;line-height:15.11px;letter-spacing:-0.8px;color:#606366">80</div>
<div class="m" style="left:0px;width:36.4px;text-align:right;top:379.29px;font-size:13.34px;line-height:15.11px;letter-spacing:-0.8px;color:#606366">81</div>
<div class="m" style="left:88px;top:379.04px;font-size:14px;line-height:15.86px;letter-spacing:-0.4px"><span style="color:#bababa">.</span><span style="color:#e8bf6a">explain</span><span style="color:#bababa"> </span><span style="color:#bababa">.</span><span style="color:#e8bf6a">item</span><span style="color:#cc7832">,</span></div>
<div class="m" style="left:0px;width:36.4px;text-align:right;top:401.29px;font-size:13.34px;line-height:15.11px;letter-spacing:-0.8px;color:#606366">82</div>
<div class="m" style="left:88px;top:401.04px;font-size:14px;line-height:15.86px;letter-spacing:-0.4px"><span style="color:#bababa">.</span><span style="color:#e8bf6a">fullscreenDivHolder</span><span style="color:#bababa"> </span><span style="color:#bababa">.</span><span style="color:#e8bf6a">item</span><span style="color:#a9b7c6"> {</span></div>
<div class="m" style="left:0px;width:36.4px;text-align:right;top:423.29px;font-size:13.34px;line-height:15.11px;letter-spacing:-0.8px;color:#606366">83</div>
<div class="m" style="left:88px;top:423.04px;font-size:14px;line-height:15.86px;letter-spacing:-0.4px"><span style="color:#bababa">  list-style</span><span style="color:#bababa">: </span><span style="color:#a5c261">none</span><span style="color:#cc7832">;</span></div>
<div class="m" style="left:0px;width:36.4px;text-align:right;top:445.29px;font-size:13.34px;line-height:15.11px;letter-spacing:-0.8px;color:#606366">84</div>
<div class="m" style="left:88px;top:445.04px;font-size:14px;line-height:15.86px;letter-spacing:-0.4px"><span style="color:#bababa">  position</span><span style="color:#bababa">: </span><span style="color:#a5c261">relative</span><span style="color:#cc7832">;</span></div>
<div class="m" style="left:0px;width:36.4px;text-align:right;top:467.29px;font-size:13.34px;line-height:15.11px;letter-spacing:-0.8px;color:#606366">85</div>
<div class="m" style="left:88px;top:467.04px;font-size:14px;line-height:15.86px;letter-spacing:-0.4px"><span style="color:#bababa">  padding-left</span><span style="color:#bababa">: </span><span style="color:#6897bb">1.875</span><span style="color:#a5c261">em</span><span style="color:#cc7832">;</span></div>
<div class="m" style="left:0px;width:36.4px;text-align:right;top:489.29px;font-size:13.34px;line-height:15.11px;letter-spacing:-0.8px;color:#606366">86</div>
<div class="m" style="left:88px;top:489.04px;font-size:14px;line-height:15.86px;letter-spacing:-0.4px"><span style="color:#bababa">  color</span><span style="color:#bababa">: </span><span style="color:#6897bb">#666666</span><span style="color:#cc7832">;</span></div>
<div class="m" style="left:0px;width:36.4px;text-align:right;top:511.29px;font-size:13.34px;line-height:15.11px;letter-spacing:-0.8px;color:#606366">87</div>
<div class="m" style="left:88px;top:511.04px;font-size:14px;line-height:15.86px;letter-spacing:-0.4px"><span style="color:#a9b7c6">}</span></div>
<div class="m" style="left:0px;width:36.4px;text-align:right;top:533.29px;font-size:13.34px;line-height:15.11px;letter-spacing:-0.8px;color:#606366">88</div>
<div class="m" style="left:0px;width:36.4px;text-align:right;top:555.29px;font-size:13.34px;line-height:15.11px;letter-spacing:-0.8px;color:#606366">89</div>
<div class="m" style="left:88px;top:555.04px;font-size:14px;line-height:15.86px;letter-spacing:-0.4px"><span style="color:#bababa">.</span><span style="color:#e8bf6a">explain</span><span style="color:#bababa"> </span><span style="color:#bababa">.</span><span style="color:#e8bf6a">item:before</span><span style="color:#cc7832">,</span></div>
<div class="m" style="left:0px;width:36.4px;text-align:right;top:577.29px;font-size:13.34px;line-height:15.11px;letter-spacing:-0.8px;color:#606366">90</div>
<div class="m" style="left:88px;top:577.04px;font-size:14px;line-height:15.86px;letter-spacing:-0.4px"><span style="color:#bababa">.</span><span style="color:#e8bf6a">fullscreenDivHolder</span><span style="color:#bababa"> </span><span style="color:#bababa">.</span><span style="color:#e8bf6a">item:before</span><span style="color:#a9b7c6"> {</span></div>
<div class="m" style="left:0px;width:36.4px;text-align:right;top:599.29px;font-size:13.34px;line-height:15.11px;letter-spacing:-0.8px;color:#606366">91</div>
<div class="m" style="left:88px;top:599.04px;font-size:14px;line-height:15.86px;letter-spacing:-0.4px"><span style="color:#bababa">  position</span><span style="color:#bababa">: </span><span style="color:#a5c261">absolute</span><span style="color:#cc7832">;</span></div>
<div class="m" style="left:0px;width:36.4px;text-align:right;top:621.29px;font-size:13.34px;line-height:15.11px;letter-spacing:-0.8px;color:#606366">92</div>
<div class="m" style="left:88px;top:621.04px;font-size:14px;line-height:15.86px;letter-spacing:-0.4px"><span style="color:#bababa">  top</span><span style="color:#bababa">: </span><span style="color:#6897bb">0.5625</span><span style="color:#a5c261">em</span><span style="color:#cc7832">;</span></div>
<div class="m" style="left:0px;width:36.4px;text-align:right;top:643.29px;font-size:13.34px;line-height:15.11px;letter-spacing:-0.8px;color:#606366">93</div>
<div class="m" style="left:88px;top:643.04px;font-size:14px;line-height:15.86px;letter-spacing:-0.4px"><span style="color:#bababa">  left</span><span style="color:#bababa">: </span><span style="color:#6897bb">1.25</span><span style="color:#a5c261">em</span><span style="color:#cc7832">;</span></div>
<div class="m" style="left:0px;width:36.4px;text-align:right;top:665.29px;font-size:13.34px;line-height:15.11px;letter-spacing:-0.8px;color:#606366">94</div>
<div class="m" style="left:88px;top:665.04px;font-size:14px;line-height:15.86px;letter-spacing:-0.4px"><span style="color:#bababa">  width</span><span style="color:#bababa">: </span><span style="color:#6897bb">5</span><span style="color:#a5c261">px</span><span style="color:#cc7832">;</span></div>
<div class="m" style="left:0px;width:36.4px;text-align:right;top:687.29px;font-size:13.34px;line-height:15.11px;letter-spacing:-0.8px;color:#606366">95</div>
<div class="m" style="left:88px;top:687.04px;font-size:14px;line-height:15.86px;letter-spacing:-0.4px"><span style="color:#bababa">  height</span><span style="color:#bababa">: </span><span style="color:#6897bb">5</span><span style="color:#a5c261">px</span><span style="color:#cc7832">;</span></div>
<div class="m" style="left:0px;width:36.4px;text-align:right;top:709.29px;font-size:13.34px;line-height:15.11px;letter-spacing:-0.8px;color:#606366">96</div>
<div class="m" style="left:88px;top:709.04px;font-size:14px;line-height:15.86px;letter-spacing:-0.4px"><span style="color:#bababa">  border-radius</span><span style="color:#bababa">: </span><span style="color:#6897bb">50</span><span style="color:#6897bb">%</span><span style="color:#cc7832">;</span></div>
<div class="m" style="left:0px;width:36.4px;text-align:right;top:731.29px;font-size:13.34px;line-height:15.11px;letter-spacing:-0.8px;color:#606366">97</div>
<div class="m" style="left:88px;top:731.04px;font-size:14px;line-height:15.86px;letter-spacing:-0.4px"><span style="color:#bababa">  background-color</span><span style="color:#bababa">: </span><span style="color:#6897bb">#333</span><span style="color:#cc7832">;</span></div>
<div class="m" style="left:0px;width:36.4px;text-align:right;top:753.29px;font-size:13.34px;line-height:15.11px;letter-spacing:-0.8px;color:#606366">98</div>
<div class="m" style="left:88px;top:753.04px;font-size:14px;line-height:15.86px;letter-spacing:-0.4px"><span style="color:#bababa">  content</span><span style="color:#bababa">: </span><span style="color:#a5c261">&#x27;&#x27;</span><span style="color:#cc7832">;</span></div>
<div class="m" style="left:0px;width:36.4px;text-align:right;top:775.29px;font-size:13.34px;line-height:15.11px;letter-spacing:-0.8px;color:#606366">99</div>
<div class="m" style="left:88px;top:775.04px;font-size:14px;line-height:15.86px;letter-spacing:-0.4px"><span style="color:#a9b7c6">}</span></div>
<div class="m" style="left:0px;width:36.4px;text-align:right;top:797.29px;font-size:13.34px;line-height:15.11px;letter-spacing:-0.8px;color:#606366">100</div>
<div class="m" style="left:0px;width:36.4px;text-align:right;top:819.29px;font-size:13.34px;line-height:15.11px;letter-spacing:-0.8px;color:#606366">101</div>
<div class="m" style="left:88px;top:819.04px;font-size:14px;line-height:15.86px;letter-spacing:-0.4px"><span style="color:#bababa">.</span><span style="color:#e8bf6a">explain</span><span style="color:#bababa"> </span><span style="color:#bababa">.</span><span style="color:#e8bf6a">order_lst</span><span style="color:#cc7832">,</span></div>
<svg style="left:78px;top:92px" width="9" height="12" viewBox="0 0 9 12"><path d="M0.5 11.5V4.5L4.5 0.5L8.5 4.5V11.5Z" fill="#313335" stroke="#75777a" stroke-width="1"/><path d="M2.5 8H6.5" stroke="#75777a" stroke-width="1"/></svg>
<svg style="left:78px;top:224px" width="9" height="12" viewBox="0 0 9 12"><path d="M0.5 11.5V4.5L4.5 0.5L8.5 4.5V11.5Z" fill="#313335" stroke="#75777a" stroke-width="1"/><path d="M2.5 8H6.5" stroke="#75777a" stroke-width="1"/></svg>
<svg style="left:78px;top:334px" width="9" height="12" viewBox="0 0 9 12"><path d="M0.5 11.5V4.5L4.5 0.5L8.5 4.5V11.5Z" fill="#313335" stroke="#75777a" stroke-width="1"/><path d="M2.5 8H6.5" stroke="#75777a" stroke-width="1"/></svg>
<svg style="left:78px;top:510px" width="9" height="12" viewBox="0 0 9 12"><path d="M0.5 11.5V4.5L4.5 0.5L8.5 4.5V11.5Z" fill="#313335" stroke="#75777a" stroke-width="1"/><path d="M2.5 8H6.5" stroke="#75777a" stroke-width="1"/></svg>
<svg style="left:78px;top:774px" width="9" height="12" viewBox="0 0 9 12"><path d="M0.5 11.5V4.5L4.5 0.5L8.5 4.5V11.5Z" fill="#313335" stroke="#75777a" stroke-width="1"/><path d="M2.5 8H6.5" stroke="#75777a" stroke-width="1"/></svg>
<svg style="left:78px;top:161px" width="9" height="11" viewBox="0 0 9 11"><path d="M0.5 0.5V6.5L4.5 10.5L8.5 6.5V0.5Z" fill="#313335" stroke="#75777a" stroke-width="1"/><path d="M2.5 4H6.5" stroke="#75777a" stroke-width="1"/></svg>
<svg style="left:78px;top:293px" width="9" height="11" viewBox="0 0 9 11"><path d="M0.5 0.5V6.5L4.5 10.5L8.5 6.5V0.5Z" fill="#313335" stroke="#75777a" stroke-width="1"/><path d="M2.5 4H6.5" stroke="#75777a" stroke-width="1"/></svg>
<svg style="left:78px;top:403px" width="9" height="11" viewBox="0 0 9 11"><path d="M0.5 0.5V6.5L4.5 10.5L8.5 6.5V0.5Z" fill="#313335" stroke="#75777a" stroke-width="1"/><path d="M2.5 4H6.5" stroke="#75777a" stroke-width="1"/></svg>
<svg style="left:78px;top:579px" width="9" height="11" viewBox="0 0 9 11"><path d="M0.5 0.5V6.5L4.5 10.5L8.5 6.5V0.5Z" fill="#313335" stroke="#75777a" stroke-width="1"/><path d="M2.5 4H6.5" stroke="#75777a" stroke-width="1"/></svg>
<div class="abs" style="left:50px;top:490px;width:10px;height:10px;background:#666666"></div>
<div class="abs" style="left:50px;top:732px;width:11px;height:11px;background:#333333;border:1px solid #2a2a2a"></div>
</div>
<div class="abs" style="left:338px;top:888px;width:1188px;height:22px;background:#313335;"></div>
<div class="abs" style="left:338px;top:888px;width:1188px;height:1px;background:#2c2e2f;"></div>
<div class="t" style="left:430px;top:891.51px;font-size:12.7px;line-height:14.186px;color:#bbbbbb;">.explain .d_tit, .fullscreenDivHolder .d_tit</div>
<div class="abs" style="left:0px;top:910px;width:1526px;height:21px;background:#3c3f41;"></div>
<div class="abs" style="left:0px;top:910px;width:1526px;height:1px;background:#323232;"></div>
<div class="abs" style="left:0px;top:931px;width:1526px;height:1px;background:#4a4d4f;"></div>
<svg style="left:33px;top:916px" width="11" height="10" viewBox="0 0 11 10"><path d="M0 1.3H2M3.5 1.3H10.5M0 4.8H2M3.5 4.8H10.5M0 8.3H2M3.5 8.3H10.5" stroke="#afb1b3" stroke-width="1.6"/></svg>
<div class="t" style="left:48px;top:914.32px;font-size:11.8px;line-height:13.181px;color:#bbbbbb;letter-spacing:-0.45px"><u>6</u>:&thinsp;TODO</div>
<svg style="left:111px;top:915px" width="11" height="11" viewBox="0 0 11 11"><rect x="0" y="0" width="11" height="11" fill="#afb1b3"/><path d="M2 3L4.5 5.5L2 8" stroke="#3c3f41" stroke-width="1.3" fill="none"/><path d="M5 8.5H9" stroke="#3c3f41" stroke-width="1.3"/></svg>
<div class="t" style="left:127.5px;top:914.32px;font-size:11.8px;line-height:13.181px;color:#bbbbbb;">Terminal</div>
<svg style="left:198px;top:915px" width="11" height="12" viewBox="0 0 11 12"><path d="M1 2V12" stroke="#afb1b3" stroke-width="1.6"/><path d="M1 7H7V3" stroke="#afb1b3" stroke-width="1.6" fill="none"/><path d="M4 4L7 0.5L10 4Z" fill="#afb1b3"/></svg>
<div class="t" style="left:213px;top:914.50px;font-size:11.6px;line-height:12.957px;color:#bbbbbb;letter-spacing:-0.3px"><u>9</u>:&thinsp;Version Control</div>
<div class="abs" style="left:0px;top:932px;width:1526px;height:17px;background:#3c3f41;"></div>
<svg style="left:6px;top:934px" width="14" height="14" viewBox="0 0 14 14"><path d="M3.5 0.5H13.5V10.5H3.5Z" fill="none" stroke="#afb1b3" stroke-width="1"/><path d="M0.5 3.5V13.5H10.5" fill="none" stroke="#afb1b3" stroke-width="1"/></svg>
<div class="t" style="left:27.3px;top:934.55px;font-size:12.65px;line-height:14.13px;color:#bbbbbb;">Externally added files can be added to Git // View Files // Always Add // Don't Ask Again (today</div>
<svg style="left:556px;top:936px" width="22" height="13" viewBox="0 0 22 13"><g stroke="#bbbbbb" stroke-width="1.1" fill="none"><ellipse cx="5" cy="3.6" rx="4.3" ry="2.6"/><path d="M5 6.2V9.3M0 9.6H10.5"/><path d="M11.8 1.2H17.5M14.6 1.2Q14.4 5.5 11.5 8M14.6 4Q15.5 6.5 18 8M17.8 4.8H20.5M20.8 0.5V9.5M13.3 9V11.8H21"/></g></svg>
<div class="t" style="left:583px;top:934.87px;font-size:12.3px;line-height:13.739px;color:#bbbbbb;">10:25)</div>
<div class="abs" style="left:718px;top:323px;width:579px;height:368px;background:#000;box-shadow:0 5px 14px rgba(0,0,0,0.3)"></div>
<div class="abs" style="left:718px;top:323px;width:579px;height:30px;background:#ffffff;"></div>
<svg style="left:726px;top:329px" width="16" height="16" viewBox="0 0 16 16"><path d="M8 0.5L11.5 4L8 7.5L4.5 4Z" fill="#f05133" opacity="0.75"/><path d="M0.5 8L4 4.5L7.5 8L4 11.5Z" fill="#5b9bd5"/><path d="M8.5 8L12 4.5L15.5 8L12 11.5Z" fill="#70ad47"/><path d="M8 8.5L11.5 12L8 15.5L4.5 12Z" fill="#ffd966"/></svg>
<div class="t" style="left:747.5px;top:330.60px;font-size:12.6px;line-height:14.074px;color:#1a1a1a;">MINGW64:/f/workspace_git/hyungju-lee/gulp-training/training</div>
<div class="abs" style="left:1178px;top:337px;width:10px;height:1px;background:#111;"></div>
<div class="abs" style="left:1223px;top:332px;width:10px;height:10px;border:1px solid #111"></div>
<svg style="left:1269px;top:332px" width="10" height="10" viewBox="0 0 10 10"><path d="M0 0L10 10M10 0L0 10" stroke="#111" stroke-width="1.1"/></svg>
<div class="abs" style="left:1280px;top:353px;width:16px;height:338px;background:#f0f0f0;"></div>
<div class="abs" style="left:1296px;top:353px;width:1px;height:338px;background:#ffffff;"></div>
<svg style="left:1284px;top:359px" width="9" height="6" viewBox="0 0 9 6"><path d="M0.8 5.2L4.5 1.5L8.2 5.2" stroke="#a3a3a3" stroke-width="1.6" fill="none"/></svg>
<svg style="left:1284px;top:680px" width="9" height="6" viewBox="0 0 9 6"><path d="M0.8 0.8L4.5 4.5L8.2 0.8" stroke="#a3a3a3" stroke-width="1.6" fill="none"/></svg>
<div class="m" style="left:719px;top:368.79px;font-size:11.9px;line-height:13.48px;letter-spacing:-0.14px"><span style="color:#2fbd2f">PM107@DESKTOP-NAQQ8NS </span><span style="color:#bf3fbf">MINGW64 </span><span style="color:#bfbf3a">/f/workspace_git/hyungju-lee/gulp-training/trainin</span></div>
<div class="m" style="left:719px;top:382.79px;font-size:11.9px;line-height:13.48px;letter-spacing:-0.14px"><span style="color:#bfbf3a">g</span><span style="color:#2fb5c5"> (master)</span></div>
<div class="m" style="left:719px;top:396.79px;font-size:11.9px;line-height:13.48px;letter-spacing:-0.14px"><span style="color:#c0c0c0">$ gulp styles</span></div>
<div class="m" style="left:719px;top:410.79px;font-size:11.9px;line-height:13.48px;letter-spacing:-0.14px"><span style="color:#c0c0c0">[</span><span style="color:#5a5a5a">11:27:51</span><span style="color:#c0c0c0">] </span><span style="color:#c0c0c0">Using gulpfile F:\workspace_git\hyungju-lee\gulp-training\training\gu</span></div>
<div class="m" style="left:719px;top:424.79px;font-size:11.9px;line-height:13.48px;letter-spacing:-0.14px"><span style="color:#c0c0c0">lpfile.js</span></div>
<div class="m" style="left:719px;top:438.79px;font-size:11.9px;line-height:13.48px;letter-spacing:-0.14px"><span style="color:#c0c0c0">[</span><span style="color:#5a5a5a">11:27:51</span><span style="color:#c0c0c0">] </span><span style="color:#c0c0c0">Starting &#x27;styles&#x27;...</span></div>
<div class="m" style="left:719px;top:452.79px;font-size:11.9px;line-height:13.48px;letter-spacing:-0.14px"><span style="color:#c0c0c0">[</span><span style="color:#5a5a5a">11:27:51</span><span style="color:#c0c0c0">] </span><span style="color:#c0c0c0">Finished &#x27;styles&#x27; after 53 ms</span></div>
<div class="m" style="left:719px;top:480.79px;font-size:11.9px;line-height:13.48px;letter-spacing:-0.14px"><span style="color:#2fbd2f">PM107@DESKTOP-NAQQ8NS </span><span style="color:#bf3fbf">MINGW64 </span><span style="color:#bfbf3a">/f/workspace_git/hyungju-lee/gulp-training/trainin</span></div>
<div class="m" style="left:719px;top:494.79px;font-size:11.9px;line-height:13.48px;letter-spacing:-0.14px"><span style="color:#bfbf3a">g</span><span style="color:#2fb5c5"> (master)</span></div>
<div class="m" style="left:719px;top:508.79px;font-size:11.9px;line-height:13.48px;letter-spacing:-0.14px"><span style="color:#c0c0c0">$ gulp styles</span></div>
<div class="m" style="left:719px;top:522.79px;font-size:11.9px;line-height:13.48px;letter-spacing:-0.14px"><span style="color:#c0c0c0">[</span><span style="color:#5a5a5a">11:32:27</span><span style="color:#c0c0c0">] </span><span style="color:#c0c0c0">Using gulpfile F:\workspace_git\hyungju-lee\gulp-training\training\gu</span></div>
<div class="m" style="left:719px;top:536.79px;font-size:11.9px;line-height:13.48px;letter-spacing:-0.14px"><span style="color:#c0c0c0">lpfile.js</span></div>
<div class="m" style="left:719px;top:550.79px;font-size:11.9px;line-height:13.48px;letter-spacing:-0.14px"><span style="color:#c0c0c0">[</span><span style="color:#5a5a5a">11:32:27</span><span style="color:#c0c0c0">] </span><span style="color:#c0c0c0">Starting &#x27;styles&#x27;...</span></div>
<div class="m" style="left:719px;top:564.79px;font-size:11.9px;line-height:13.48px;letter-spacing:-0.14px"><span style="color:#c0c0c0">[</span><span style="color:#5a5a5a">11:32:27</span><span style="color:#c0c0c0">] </span><span style="color:#c0c0c0">Finished &#x27;styles&#x27; after 55 ms</span></div>
<div class="m" style="left:719px;top:592.79px;font-size:11.9px;line-height:13.48px;letter-spacing:-0.14px"><span style="color:#2fbd2f">PM107@DESKTOP-NAQQ8NS </span><span style="color:#bf3fbf">MINGW64 </span><span style="color:#bfbf3a">/f/workspace_git/hyungju-lee/gulp-training/trainin</span></div>
<div class="m" style="left:719px;top:606.79px;font-size:11.9px;line-height:13.48px;letter-spacing:-0.14px"><span style="color:#bfbf3a">g</span><span style="color:#2fb5c5"> (master)</span></div>
<div class="m" style="left:719px;top:620.79px;font-size:11.9px;line-height:13.48px;letter-spacing:-0.14px"><span style="color:#c0c0c0">$ </span></div>
<div class="abs" style="left:733px;top:620px;width:1px;height:14px;background:#c0c0c0;"></div>
<div class="abs" style="left:712px;top:478px;width:578px;height:108px;border:3px solid #e3242b"></div>
</body></html>
